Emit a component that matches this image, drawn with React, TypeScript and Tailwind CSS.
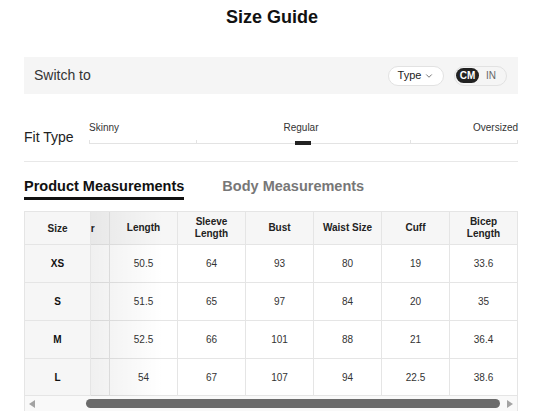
import { ChevronDown } from "lucide-react";

type Row = { size: string; values: string[] };

const headers = ["Length", "Sleeve\nLength", "Bust", "Waist Size", "Cuff", "Bicep\nLength"];

const rows: Row[] = [
  { size: "XS", values: ["50.5", "64", "93", "80", "19", "33.6"] },
  { size: "S", values: ["51.5", "65", "97", "84", "20", "35"] },
  { size: "M", values: ["52.5", "66", "101", "88", "21", "36.4"] },
  { size: "L", values: ["54", "67", "107", "94", "22.5", "38.6"] },
];

function FitSlider() {
  return (
    <div className="flex-1">
      <div className="flex items-end justify-between text-[10px] leading-[12px] text-[#333]">
        <span>Skinny</span>
        <span className="pl-[10px]">Regular</span>
        <span>Oversized</span>
      </div>
      <div className="relative mt-[7px] h-[4px]">
        <div className="absolute inset-x-0 top-[2px] h-[1px] bg-[#e3e3e3]" />
        {["left-0", "left-[107px]", "left-[321px]", "right-0"].map((pos) => (
          <div key={pos} className={`absolute top-[-1px] h-[4px] w-[1px] bg-[#e3e3e3] ${pos}`} />
        ))}
        <div className="absolute left-[206px] top-0 h-[4px] w-[16px] bg-[#222]" />
      </div>
    </div>
  );
}

function SizeTable() {
  return (
    <div className="relative overflow-hidden border-l border-t border-r border-[#e5e5e5]">
      <div className="grid grid-cols-[66px_19px_repeat(5,68px)_67px] text-[10px] text-[#222]">
        {/* header */}
        <div className="relative z-10 flex h-[33px] items-center justify-center border-b border-r border-[#e5e5e5] bg-[#f6f6f6] font-bold">
          Size
        </div>
        <div className="flex h-[33px] justify-end overflow-hidden border-b border-r border-[#e5e5e5] bg-[#f6f6f6]">
          <div className="flex w-[68px] shrink-0 items-center justify-center pr-[4px] font-bold">Shoulder</div>
        </div>
        {headers.map((h, i) => (
          <div
            key={h}
            className={`flex h-[33px] items-center justify-center whitespace-pre-line border-b border-[#e5e5e5] bg-[#f6f6f6] text-center font-bold leading-[12px] ${
              i < headers.length - 1 ? "border-r" : ""
            }`}
          >
            {h}
          </div>
        ))}

        {rows.map((row, r) => {
          const h = r === rows.length - 1 ? "h-[37px]" : "h-[38px]";
          return [
            <div
              key={row.size}
              className={`relative z-10 flex items-center justify-center border-b border-r border-[#e5e5e5] bg-[#f6f6f6] font-bold text-[#111] ${h}`}
            >
              {row.size}
            </div>,
            <div key={row.size + "-s"} className={`border-b border-r border-[#e5e5e5] bg-white ${h}`} />,
            ...row.values.map((v, i) => (
              <div
                key={row.size + i}
                className={`flex items-center justify-center border-b border-[#e5e5e5] bg-white text-[#333] ${h} ${
                  i < row.values.length - 1 ? "border-r" : ""
                }`}
              >
                {v}
              </div>
            )),
          ];
        })}
      </div>
      <div className="pointer-events-none absolute bottom-[15px] left-[66px] top-0 w-[72px] bg-gradient-to-r from-black/[0.06] to-transparent" />

      {/* scrollbar */}
      <div className="flex h-[15px] items-center bg-[#f9f9f9] px-[4px]">
        <div className="h-0 w-0 border-y-[4px] border-r-[6px] border-y-transparent border-r-[#a3a3a3]" />
        <div className="ml-[51px] h-[9px] w-[414px] rounded-full bg-[#6b6b6b]" />
        <div className="ml-[7px] h-0 w-0 border-y-[4px] border-l-[6px] border-y-transparent border-l-[#a3a3a3]" />
      </div>
    </div>
  );
}

export default function App() {
  return (
    <div className="h-[417px] w-[544px] bg-white font-['Liberation_Sans',Arial,sans-serif] text-[#222]">
      <h1 className="pt-[7px] text-center text-[18px] font-bold leading-[20px] text-[#111]">Size Guide</h1>

      <div className="ml-[24px] mt-[30px] w-[494px]">
        <div className="flex h-[37px] items-center justify-between bg-[#f5f5f5] pl-[10px] pr-[11px]">
          <span className="text-[14px] text-[#333]">Switch to</span>
          <div className="flex items-center gap-[10px]">
            <button className="flex h-[20px] w-[56px] items-center justify-center gap-[3px] rounded-full border border-[#e2e2e2] bg-white text-[11px] text-[#222]">
              Type
              <ChevronDown size={10} strokeWidth={1.5} />
            </button>
            <div className="flex h-[20px] w-[53px] items-center rounded-full border border-[#e2e2e2] bg-[#f5f5f5] px-[1px] text-[10px]">
              <span className="flex h-[15px] w-[23px] items-center justify-center rounded-full bg-[#222] font-bold text-white">
                CM
              </span>
              <span className="ml-[7px] text-[#666]">IN</span>
            </div>
          </div>
        </div>

        <div className="mt-[28px] flex items-end">
          <span className="w-[65px] text-[14px] leading-[16px] text-[#222]">Fit Type</span>
          <FitSlider />
        </div>

        <div className="mt-[16px] h-[1px] bg-[#e8e8e8]" />

        <div className="mt-[15px] flex items-start gap-[38px] text-[14.5px] font-bold leading-[18px]">
          <div>
            <div className="text-[#111]">Product Measurements</div>
            <div className="mt-[2px] h-[3px] bg-[#111]" />
          </div>
          <div className="text-[#777]">Body Measurements</div>
        </div>

        <div className="mt-[11px]">
          <SizeTable />
        </div>
      </div>
    </div>
  );
}
